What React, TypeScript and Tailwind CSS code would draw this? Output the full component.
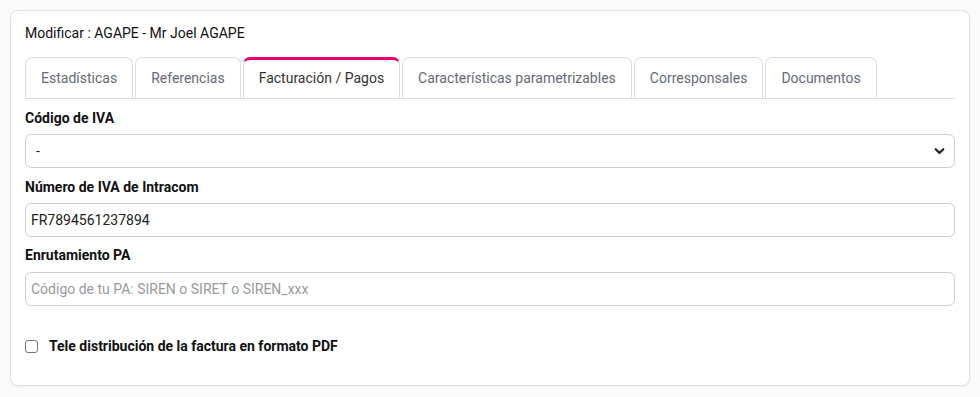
const tabs = [
  'Estadísticas',
  'Referencias',
  'Facturación / Pagos',
  'Características parametrizables',
  'Corresponsales',
  'Documentos',
]

const font = { fontFamily: 'Roboto, "Liberation Sans", sans-serif' }

export default function App() {
  return (
    <div className="min-h-[397px] bg-[#fafafa] pt-[10px] px-[10px]" style={font}>
      <div className="bg-white border border-[#e2e2e2] rounded-lg shadow-[0_1px_3px_rgba(0,0,0,0.05)] px-[14px] pt-[12px] pb-[29px]">
        {/* Title */}
        <div className="h-5 leading-5 text-[14px] text-[#111]">Modificar : AGAPE - Mr Joel AGAPE</div>

        {/* Tabs */}
        <div className="mt-[14px] flex gap-[2px] border-b border-[#dedede]">
          {tabs.map((t, i) => {
            const active = i === 2
            return (
              <div
                key={t}
                className={
                  active
                    ? 'h-[41px] -mb-px px-[15px] flex items-center rounded-t-[7px] border-x border-t-[3px] border-x-[#dedede] border-t-[#e6006f] bg-white text-[14px] text-[#333] border-b border-b-white'
                    : 'h-[41px] px-[15px] flex items-center rounded-t-[7px] border-x border-t border-[#dedede] text-[14px] text-[#666b74]'
                }
              >
                {t}
              </div>
            )
          })}
        </div>

        {/* Código de IVA */}
        <label className="block mt-[9px] h-5 leading-5 text-[14px] font-bold text-[#111]">Código de IVA</label>
        <div className="relative mt-[6px]">
          <select className="w-full h-[34px] appearance-none rounded-[6px] border border-[#cfcfd4] bg-white pl-[10px] pr-8 text-[14px] text-[#222] outline-none">
            <option>-</option>
          </select>
          <svg
            className="absolute right-[10px] top-1/2 -translate-y-1/2 pointer-events-none"
            width="11"
            height="11"
            viewBox="0 0 16 16"
          >
            <path d="M2.5 5.5 8 11l5.5-5.5" fill="none" stroke="#222" strokeWidth="3.2" strokeLinecap="round" strokeLinejoin="round" />
          </svg>
        </div>

        {/* Número de IVA */}
        <label className="block mt-[9px] h-5 leading-5 text-[14px] font-bold text-[#111]">Número de IVA de Intracom</label>
        <input
          defaultValue="FR7894561237894"
          className="block mt-[6px] w-full h-[34px] rounded-[6px] border border-[#cfcfd4] bg-white px-[5px] text-[14px] text-[#222] outline-none"
        />

        {/* Enrutamiento PA */}
        <label className="block mt-[8px] h-5 leading-5 text-[14px] font-bold text-[#111]">Enrutamiento PA</label>
        <input
          placeholder="Código de tu PA: SIREN o SIRET o SIREN_xxx"
          className="block mt-[7px] w-full h-[34px] rounded-[6px] border border-[#cfcfd4] bg-white px-[5px] text-[14px] text-[#222] placeholder:text-[#9a9a9a] outline-none"
        />

        {/* Checkbox */}
        <label className="mt-[30px] flex items-center h-5 gap-[11px]">
          <span className="w-[13px] h-[13px] rounded-[3px] border border-[#767676] bg-white" />
          <span className="text-[14px] font-bold text-[#111]">Tele distribución de la factura en formato PDF</span>
        </label>
      </div>
    </div>
  )
}
